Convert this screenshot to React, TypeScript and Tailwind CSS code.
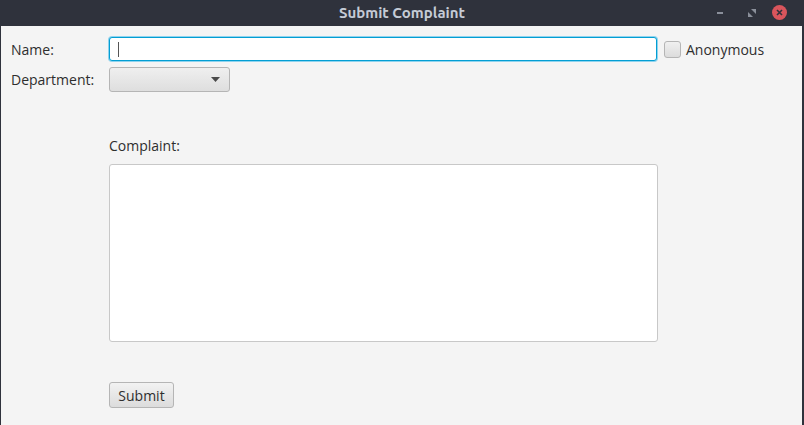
export default function App() {
  const font = { fontFamily: '"Open Sans", "DejaVu Sans", sans-serif' };
  return (
    <div className="w-[804px] h-[425px] flex flex-col bg-[#2f323c] overflow-hidden" style={font}>
      {/* Title bar */}
      <div className="h-[26px] flex items-center relative shrink-0">
        <div
          className="flex-1 text-center text-[15px] font-bold text-[#c5cbd6]"
          style={{ fontFamily: '"Ubuntu", "Noto Sans", "DejaVu Sans", sans-serif' }}
        >
          Submit Complaint
        </div>
        <div className="absolute right-[17px] top-[5px] flex items-center">
          <div className="w-[6px] h-[2px] bg-[#8a8f9a]" />
          <svg className="ml-[25px]" width="8" height="8" viewBox="0 0 8 8">
            <path d="M3 0H8V5Z" fill="#8a8f9a" />
            <path d="M0 3V8H5Z" fill="#8a8f9a" />
          </svg>
          <div className="ml-[16px] w-[15px] h-[15px] rounded-full bg-[#d9555c] flex items-center justify-center">
            <svg width="7" height="7" viewBox="0 0 7 7">
              <path d="M1 1L6 6M6 1L1 6" stroke="#2f323c" strokeWidth="1.6" />
            </svg>
          </div>
        </div>
      </div>

      {/* Body */}
      <div className="flex-1 bg-[#f4f4f4] ml-px mr-[2px] text-[14px] text-[#2e2e2e]">
        <div className="flex items-center mt-[11px] h-[24px]">
          <div className="w-[108px] shrink-0 pl-[10px]">Name:</div>
          <div className="w-[548px] shrink-0 h-[24px] bg-white border border-[#039ed3] rounded-[3px] shadow-[0_0_0_1px_#8fd3ee] flex items-center pl-[8px]">
            <div className="w-px h-[15px] bg-[#555]" />
          </div>
          <div className="ml-[7px] shrink-0 w-[17px] h-[17px] rounded-[3px] border border-[#b5b5b5] bg-gradient-to-b from-[#f0f0f0] to-[#dcdcdc]" />
          <div className="ml-[5px]">Anonymous</div>
        </div>

        <div className="flex items-center mt-[6px] h-[25px]">
          <div className="w-[108px] shrink-0 pl-[10px]">Department:</div>
          <div className="w-[121px] h-[25px] rounded-[3px] border border-[#b5b5b5] bg-gradient-to-b from-[#efefef] to-[#dedede] flex items-center justify-end pr-[9px]">
            <svg width="9" height="5" viewBox="0 0 9 5">
              <path d="M0 0H9L4.5 5Z" fill="#4a4a4a" />
            </svg>
          </div>
        </div>

        <div className="ml-[108px] mt-[45px] leading-[18px]">Complaint:</div>

        <div className="ml-[108px] mt-[9px] w-[549px] h-[178px] bg-white border border-[#c8c8c8] rounded-[3px]" />

        <div className="ml-[108px] mt-[40px]">
          <button className="w-[65px] h-[26px] rounded-[3px] border border-[#b5b5b5] bg-gradient-to-b from-[#f2f2f2] to-[#dcdcdc] text-[14px] text-[#2e2e2e]">
            Submit
          </button>
        </div>
      </div>
    </div>
  );
}
